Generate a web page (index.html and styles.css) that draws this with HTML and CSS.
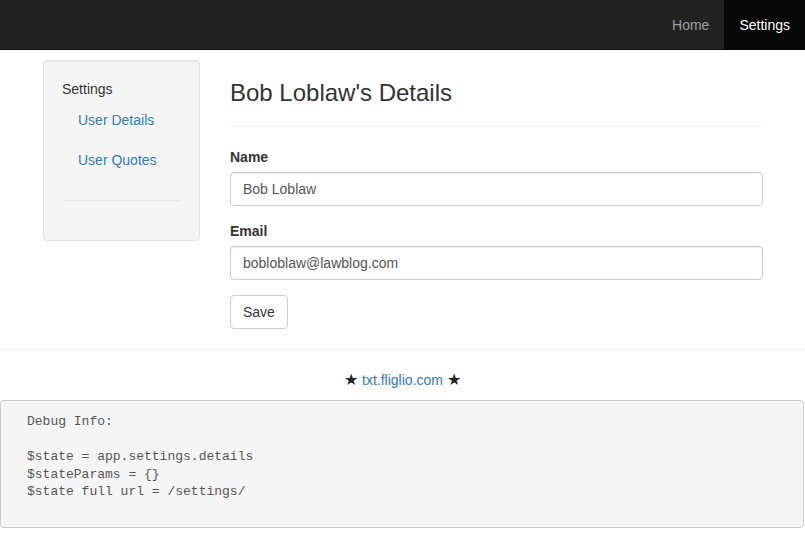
FILE: index.html
```html
<!DOCTYPE html>
<html lang="en">
<head>
<meta charset="utf-8">
<title>Settings</title>
<link rel="stylesheet" href="styles.css">
</head>
<body>
<nav class="navbar">
  <ul class="navbar-nav">
    <li><a href="#" class="nav-link">Home</a></li>
    <li class="active"><a href="#" class="nav-link">Settings</a></li>
  </ul>
</nav>
<div class="page">
  <aside class="sidebar">
    <div class="well">
      <div class="side-header">Settings</div>
      <ul class="side-nav">
        <li><a href="#" class="side-link">User Details</a></li>
        <li><a href="#" class="side-link">User Quotes</a></li>
      </ul>
      <hr class="side-rule">
    </div>
  </aside>
  <main class="main">
    <h3 class="page-title">Bob Loblaw's Details</h3>
    <form class="details-form">
      <div class="form-group">
        <label class="form-label" for="name">Name</label>
        <input class="form-control" id="name" type="text" value="Bob Loblaw">
      </div>
      <div class="form-group">
        <label class="form-label" for="email">Email</label>
        <input class="form-control" id="email" type="text" value="bobloblaw@lawblog.com">
      </div>
      <button type="button" class="btn">Save</button>
    </form>
  </main>
</div>
<footer class="footer">
  <p class="credit"><span class="star">★</span> <a href="#" class="credit-link">txt.fliglio.com</a> <span class="star">★</span></p>
  <pre class="debug">Debug Info:

$state = app.settings.details
$stateParams = {}
$state full url = /settings/
</pre>
</footer>
</body>
</html>
```

FILE: styles.css
```css
* { box-sizing: border-box; }

html, body {
  margin: 0;
  padding: 0;
  background: #fff;
}

body {
  font-family: "Liberation Sans", Arial, Helvetica, sans-serif;
  font-size: 14px;
  line-height: 20px;
  color: #333;
}

a { text-decoration: none; }

.navbar {
  height: 50px;
  background: #222;
  border-bottom: 1px solid #080808;
  display: flex;
  justify-content: flex-end;
}

.navbar-nav {
  list-style: none;
  margin: 0;
  padding: 0;
  display: flex;
}

.nav-link {
  display: block;
  padding: 15px 15px 14px;
  line-height: 20px;
  color: #9d9d9d;
}

.active .nav-link {
  background: #080808;
  color: #fff;
}

.page {
  display: flex;
  gap: 30px;
  padding: 0 42px 0 43px;
}

.sidebar {
  width: 157px;
  flex: none;
}

.well {
  margin-top: 10px;
  background: #f5f5f5;
  border: 1px solid #e3e3e3;
  border-radius: 4px;
  padding: 19px;
  box-shadow: inset 0 1px 1px rgba(0, 0, 0, 0.05);
}

.side-header {
  margin: -1px 0 1px -1px;
  line-height: 20px;
  color: #333;
}

.side-nav {
  list-style: none;
  margin: 0;
  padding: 0;
}

.side-link {
  display: block;
  padding: 10px 15px;
  color: #337ab7;
}

.side-rule {
  margin: 20px 0;
  border: 0;
  border-top: 1px solid #e8e8e8;
}

.main {
  flex: 1;
  min-width: 0;
}

.page-title {
  margin: 30px 0 20px;
  padding-bottom: 20px;
  border-bottom: 1px solid #eee;
  font-size: 24px;
  line-height: 26px;
  font-weight: 500;
  color: #333;
}

.details-form { margin: 0; }

.form-group { margin-bottom: 15px; }

.form-label {
  display: block;
  margin-bottom: 5px;
  font-weight: bold;
  line-height: 20px;
}

.form-control {
  display: block;
  width: 100%;
  height: 34px;
  padding: 6px 12px;
  font-family: inherit;
  font-size: 14px;
  line-height: 20px;
  color: #555;
  background: #fff;
  border: 1px solid #ccc;
  border-radius: 4px;
  box-shadow: inset 0 1px 1px rgba(0, 0, 0, 0.075);
  margin: 0;
}

.btn {
  display: block;
  height: 34px;
  padding: 6px 12px;
  font-family: inherit;
  font-size: 14px;
  line-height: 20px;
  color: #333;
  background: #fff;
  border: 1px solid #ccc;
  border-radius: 4px;
  margin: 0;
}

.footer {
  margin-top: 20px;
  border-top: 1px solid #eee;
  padding-top: 20px;
}

.credit {
  margin: 0;
  text-align: center;
  line-height: 20px;
}

.star { color: #222; font-size: 16px; }

.credit-link { color: #337ab7; }

.debug {
  margin: 10px 1px 0 0;
  padding: 12px 10px 10px 26px;
  background: #f5f5f5;
  border: 1px solid #ccc;
  border-radius: 4px;
  font-family: "Liberation Mono", "Courier New", monospace;
  font-size: 13px;
  line-height: 17.5px;
  color: #555;
  height: 128px;
  overflow: hidden;
}
```
